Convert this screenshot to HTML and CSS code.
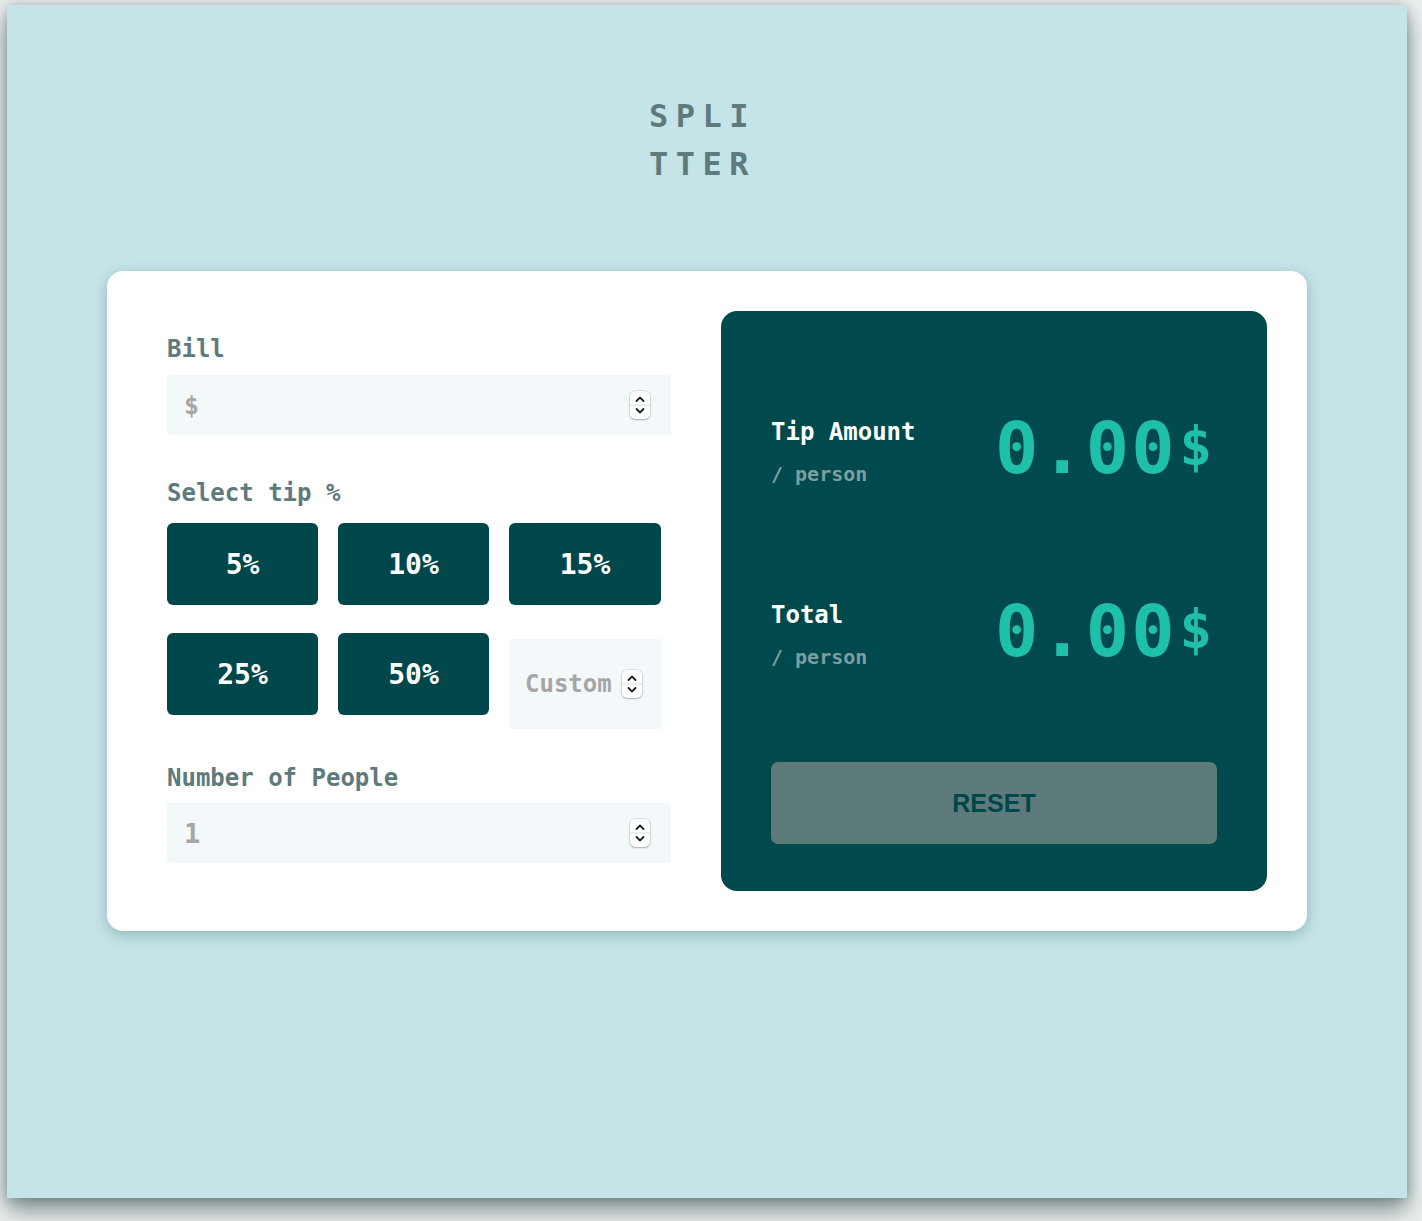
FILE: index.html
```html
<!DOCTYPE html>
<html lang="en">
<head>
<meta charset="utf-8">
<title>Splitter</title>
<link rel="stylesheet" href="styles.css">
</head>
<body>
<div class="screen">
  <h1 class="logo">SPLITTER</h1>
  <main class="card">
    <section class="inputs">
      <label class="label">Bill</label>
      <div class="field">
        <input class="field-input" type="text" placeholder="$">
        <span class="spin"><svg width="20" height="28" viewBox="0 0 20 28"><polyline points="6.5,10 10,6.5 13.5,10" fill="none" stroke="#222" stroke-width="1.8" stroke-linecap="round" stroke-linejoin="round"/><line x1="0" y1="14" x2="20" y2="14" stroke="#dcdcdc" stroke-width="1"/><polyline points="6.5,18 10,21.5 13.5,18" fill="none" stroke="#222" stroke-width="1.8" stroke-linecap="round" stroke-linejoin="round"/></svg></span>
      </div>
      <label class="label label-tip">Select tip %</label>
      <div class="tips">
        <button class="tip">5%</button>
        <button class="tip">10%</button>
        <button class="tip">15%</button>
        <button class="tip">25%</button>
        <button class="tip">50%</button>
        <div class="field custom">
          <input class="field-input" type="text" placeholder="Custom">
          <span class="spin"><svg width="20" height="28" viewBox="0 0 20 28"><polyline points="6.5,10 10,6.5 13.5,10" fill="none" stroke="#222" stroke-width="1.8" stroke-linecap="round" stroke-linejoin="round"/><line x1="0" y1="14" x2="20" y2="14" stroke="#dcdcdc" stroke-width="1"/><polyline points="6.5,18 10,21.5 13.5,18" fill="none" stroke="#222" stroke-width="1.8" stroke-linecap="round" stroke-linejoin="round"/></svg></span>
        </div>
      </div>
      <label class="label label-people">Number of People</label>
      <div class="field">
        <input class="field-input people" type="text" placeholder="1">
        <span class="spin"><svg width="20" height="28" viewBox="0 0 20 28"><polyline points="6.5,10 10,6.5 13.5,10" fill="none" stroke="#222" stroke-width="1.8" stroke-linecap="round" stroke-linejoin="round"/><line x1="0" y1="14" x2="20" y2="14" stroke="#dcdcdc" stroke-width="1"/><polyline points="6.5,18 10,21.5 13.5,18" fill="none" stroke="#222" stroke-width="1.8" stroke-linecap="round" stroke-linejoin="round"/></svg></span>
      </div>
    </section>
    <section class="result">
      <div class="row">
        <div class="row-text">
          <div class="row-title">Tip Amount</div>
          <div class="row-sub">/ person</div>
        </div>
        <div class="amount">0.00<span class="cur">$</span></div>
      </div>
      <div class="row row-total">
        <div class="row-text">
          <div class="row-title">Total</div>
          <div class="row-sub">/ person</div>
        </div>
        <div class="amount">0.00<span class="cur">$</span></div>
      </div>
      <button class="reset">RESET</button>
    </section>
  </main>
</div>
</body>
</html>
```

FILE: styles.css
```css
* { box-sizing: border-box; }

html, body {
  margin: 0;
  padding: 0;
}

body {
  background: #eef0f0;
  font-family: "DejaVu Sans Mono", "Liberation Mono", monospace;
  font-weight: bold;
  width: 1422px;
  height: 1221px;
  overflow: hidden;
}

.screen {
  width: 1400px;
  height: 1193px;
  margin: 5px 0 0 7px;
  background: #c5e4e7;
  box-shadow: 0 12px 22px rgba(30, 60, 62, 0.55), 0 0 10px rgba(30, 60, 62, 0.25);
  padding-top: 87px;
}

.logo {
  width: 116px;
  margin: 0 auto;
  padding-right: 6px;
  font-size: 32px;
  line-height: 48px;
  letter-spacing: 7.5px;
  color: #5e7a7d;
  word-break: break-all;
  font-weight: bold;
}

.card {
  width: 1200px;
  height: 660px;
  margin: 83px auto 0;
  background: #ffffff;
  border-radius: 16px;
  padding: 40px;
  display: flex;
  gap: 50px;
  box-shadow: 0 4px 14px rgba(0, 71, 75, 0.28);
}

.inputs {
  width: 524px;
  padding: 23px 0 0 20px;
  display: flex;
  flex-direction: column;
}

.label {
  display: block;
  font-size: 24px;
  line-height: 30px;
  height: 30px;
  color: #5e7a7d;
  margin-bottom: 11px;
}

.label-tip {
  margin-top: 43px;
  margin-bottom: 15px;
}

.label-people {
  margin-top: 34px;
  margin-bottom: 10px;
}

.field {
  display: flex;
  align-items: center;
  height: 60px;
  background: #f3f9fa;
  padding: 0 21px 0 17px;
}

.field-input {
  flex: 1;
  min-width: 0;
  border: none;
  outline: none;
  background: transparent;
  font-family: "DejaVu Sans Mono", "Liberation Mono", monospace;
  font-weight: bold;
  font-size: 25px;
  color: #00474b;
  padding: 0;
}

.field-input.people {
  font-size: 27px;
}

.field-input::placeholder {
  color: #a6a6a6;
}

.spin {
  display: block;
  width: 20px;
  height: 28px;
  background: #ffffff;
  border-radius: 5px;
  box-shadow: 0 0 0 0.5px rgba(0, 0, 0, 0.18), 0 1px 2px rgba(0, 0, 0, 0.22);
  flex: none;
}

.spin svg {
  display: block;
}

.tips {
  display: grid;
  grid-template-columns: 151px 151px 152px;
  column-gap: 20px;
  row-gap: 28px;
  align-items: start;
}

.tip {
  height: 82px;
  border: none;
  border-radius: 6px;
  background: #00474b;
  color: #ffffff;
  font-family: "DejaVu Sans Mono", "Liberation Mono", monospace;
  font-weight: bold;
  font-size: 28px;
  padding: 0;
}

.custom {
  margin-top: 6px;
  height: 90px;
  padding: 0 19px 0 16px;
}

.custom .field-input {
  font-size: 24px;
}

.result {
  width: 546px;
  height: 580px;
  background: #00494d;
  border-radius: 16px;
  padding: 100px 50px 45px;
  display: flex;
  flex-direction: column;
}

.row {
  display: flex;
  justify-content: space-between;
  align-items: flex-start;
}

.row-total {
  margin-top: 106px;
}

.row-text {
  margin-top: 6px;
}

.row-title {
  font-size: 24px;
  line-height: 30px;
  color: #ffffff;
}

.row-sub {
  margin-top: 13px;
  font-size: 20px;
  line-height: 28px;
  color: #7f9d9f;
}

.amount {
  font-size: 72px;
  line-height: 72px;
  letter-spacing: 2px;
  color: #1ec0a9;
  margin-right: 5px;
}

.cur {
  font-size: 54px;
  letter-spacing: 0;
  vertical-align: 8px;
  margin-left: 3px;
}

.reset {
  margin-top: 91px;
  height: 82px;
  border: none;
  border-radius: 7px;
  background: #5e7b7c;
  color: #00474b;
  font-family: "Liberation Sans", Arial, sans-serif;
  font-weight: bold;
  font-size: 25px;
  padding: 0;
}
```
